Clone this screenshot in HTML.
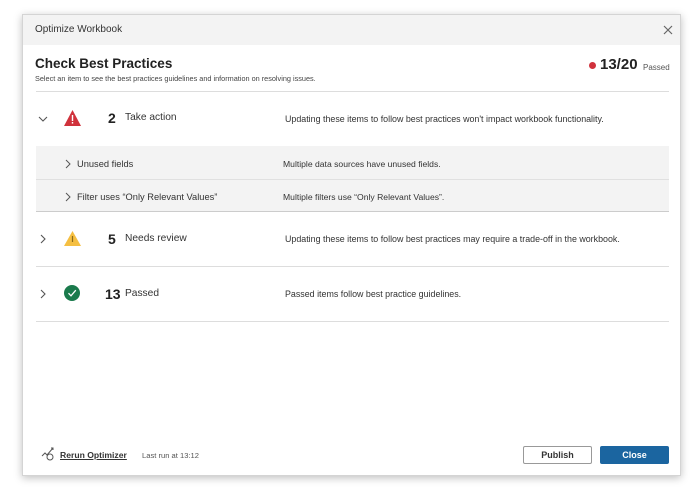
<!DOCTYPE html>
<html><head><style>
body{margin:0;width:700px;height:495px;background:#fff;font-family:"Liberation Sans",sans-serif;position:relative;overflow:hidden}
.dlg{position:absolute;left:22px;top:14px;width:659px;height:462px;background:#fff;box-shadow:0 2px 8px rgba(0,0,0,.25);border:1px solid #d4d4d4;box-sizing:border-box}
.hdr{position:absolute;left:0;top:0;right:0;height:30px;background:#f3f3f3;font-size:10px;color:#333;line-height:30px;padding-left:12px}
.a{position:absolute;white-space:nowrap}
.line{position:absolute;left:13px;width:633px;height:1px;background:#ddd}
.t{font-size:8.9px;color:#333}
</style></head><body>
<div class="dlg">
<div class="hdr">Optimize Workbook</div>
<svg class="a" style="left:640px;top:10px" width="10" height="10"><path d="M1 1L9 9M9 1L1 9" stroke="#666" stroke-width="1.2"/></svg>
<div class="a" style="left:12px;top:41px;font-size:13.5px;font-weight:bold;color:#222">Check Best Practices</div>
<div class="a" style="left:12px;top:59px;font-size:7.3px;color:#444">Select an item to see the best practices guidelines and information on resolving issues.</div>
<div class="a" style="left:566px;top:47px;width:7px;height:7px;border-radius:50%;background:#d0323c"></div>
<div class="a" style="left:577px;top:41px;font-size:15px;font-weight:bold;color:#222">13/20</div>
<div class="a" style="left:620px;top:48px;font-size:8px;color:#555">Passed</div>
<div class="line" style="top:76px"></div>

<svg class="a" style="left:15px;top:100px" width="10" height="8"><path d="M1 2L5 6L9 2" stroke="#555" fill="none" stroke-width="1.1"/></svg>
<svg class="a" style="left:41px;top:95px" width="17" height="16"><path d="M8.5 0L17 16H0Z" fill="#d0323c"/><rect x="7.8" y="5" width="1.4" height="6" fill="#fff"/><rect x="7.8" y="12" width="1.4" height="1.6" fill="#fff"/></svg>
<div class="a" style="left:85px;top:95px;font-size:14px;font-weight:bold;color:#222">2</div>
<div class="a" style="left:102px;top:97px;font-size:10.2px;color:#333">Take action</div>
<div class="a t" style="left:262px;top:99px">Updating these items to follow best practices won't impact workbook functionality.</div>

<div class="a" style="left:13px;top:131px;width:633px;height:65px;background:#f3f3f3"></div>
<div class="line" style="top:164px;background:#e0e0e0"></div>
<div class="line" style="top:196px;background:#ccc"></div>
<svg class="a" style="left:42px;top:144px" width="6" height="10"><path d="M1 1L5 5L1 9" stroke="#555" fill="none" stroke-width="1"/></svg>
<div class="a" style="left:54px;top:144px;font-size:9.3px;color:#333">Unused fields</div>
<div class="a" style="left:260px;top:144px;font-size:8.6px;color:#333">Multiple data sources have unused fields.</div>
<svg class="a" style="left:42px;top:177px" width="6" height="10"><path d="M1 1L5 5L1 9" stroke="#555" fill="none" stroke-width="1"/></svg>
<div class="a" style="left:54px;top:177px;font-size:9.3px;color:#333">Filter uses “Only Relevant Values”</div>
<div class="a" style="left:260px;top:177px;font-size:8.6px;color:#333">Multiple filters use “Only Relevant Values”.</div>

<svg class="a" style="left:17px;top:219px" width="7" height="10"><path d="M1 1L5 5L1 9" stroke="#555" fill="none" stroke-width="1.1"/></svg>
<svg class="a" style="left:41px;top:216px" width="17" height="15"><path d="M8.5 0L17 15H0Z" fill="#f5bf42"/><rect x="7.9" y="5" width="1.2" height="6" fill="#8a6a1a"/></svg>
<div class="a" style="left:85px;top:216px;font-size:14px;font-weight:bold;color:#222">5</div>
<div class="a" style="left:102px;top:218px;font-size:10.2px;color:#333">Needs review</div>
<div class="a t" style="left:262px;top:219px">Updating these items to follow best practices may require a trade-off in the workbook.</div>
<div class="line" style="top:251px"></div>

<svg class="a" style="left:17px;top:274px" width="7" height="10"><path d="M1 1L5 5L1 9" stroke="#555" fill="none" stroke-width="1.1"/></svg>
<svg class="a" style="left:41px;top:270px" width="16" height="16"><circle cx="8" cy="8" r="8" fill="#1a7a4c"/><path d="M4.5 8.2L7 10.8L11.8 5.2" stroke="#fff" fill="none" stroke-width="1.3"/></svg>
<div class="a" style="left:82px;top:271px;font-size:14px;font-weight:bold;color:#222">13</div>
<div class="a" style="left:102px;top:273px;font-size:10.2px;color:#333">Passed</div>
<div class="a t" style="left:262px;top:274px">Passed items follow best practice guidelines.</div>
<div class="line" style="top:306px"></div>

<svg class="a" style="left:18px;top:432px" width="16" height="14"><path d="M1 9L4 6L6 8L12 1M10 1H12V3" stroke="#555" fill="none" stroke-width="1"/><circle cx="9" cy="10" r="3" stroke="#555" fill="none" stroke-width="1"/></svg>
<div class="a" style="left:37px;top:435px;font-size:8.6px;font-weight:bold;color:#333;text-decoration:underline">Rerun Optimizer</div>
<div class="a" style="left:119px;top:436px;font-size:7.6px;color:#555">Last run at 13:12</div>
<div class="a" style="left:500px;top:431px;width:67px;height:16px;border:1px solid #999;border-radius:2px;font-size:9px;font-weight:bold;color:#333;text-align:center;line-height:16px">Publish</div>
<div class="a" style="left:577px;top:431px;width:69px;height:18px;background:#1b65a0;border-radius:2px;font-size:9px;font-weight:bold;color:#fff;text-align:center;line-height:18px">Close</div>
</div>
</body></html>
